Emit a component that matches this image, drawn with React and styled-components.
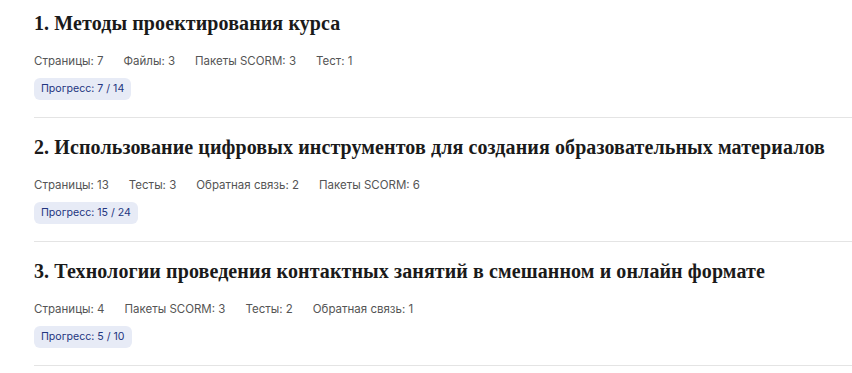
import React from "react";
import styled, { createGlobalStyle } from "styled-components";

const GlobalStyle = createGlobalStyle`
  body {
    margin: 0;
    background: #fff;
    font-family: Inter, "Noto Sans", sans-serif;
  }
`;

const Page = styled.div`
  padding: 0 0 0 34px;
`;

const Module = styled.section`
  padding: 10px 0 17px;
  border-bottom: 1px solid #e4e4e4;
  & + & {
    padding-top: 16px;
  }
`;

const Title = styled.h2`
  margin: 0;
  font-family: "Liberation Serif", "DejaVu Serif", serif;
  font-weight: 700;
  font-size: 20px;
  line-height: 26px;
  letter-spacing: 0.1px;
  color: #1a1a1a;
`;

const Stats = styled.div`
  display: flex;
  gap: 20px;
  margin-top: 17px;
  font-size: 11.5px;
  line-height: 16px;
  color: #555;
`;

const Progress = styled.span`
  display: inline-block;
  margin-top: 9px;
  padding: 3px 7px;
  border-radius: 6px;
  background: #e7ebf6;
  color: #23357f;
  font-size: 10.6px;
  line-height: 16px;
`;

const modules = [
  {
    title: "1. Методы проектирования курса",
    stats: ["Страницы: 7", "Файлы: 3", "Пакеты SCORM: 3", "Тест: 1"],
    progress: "7 / 14",
  },
  {
    title:
      "2. Использование цифровых инструментов для создания образовательных материалов",
    stats: ["Страницы: 13", "Тесты: 3", "Обратная связь: 2", "Пакеты SCORM: 6"],
    progress: "15 / 24",
  },
  {
    title:
      "3. Технологии проведения контактных занятий в смешанном и онлайн формате",
    stats: ["Страницы: 4", "Пакеты SCORM: 3", "Тесты: 2", "Обратная связь: 1"],
    progress: "5 / 10",
  },
];

export default function App() {
  return (
    <>
      <GlobalStyle />
      <Page>
        {modules.map((m) => (
          <Module key={m.title}>
            <Title>{m.title}</Title>
            <Stats>
              {m.stats.map((s) => (
                <span key={s}>{s}</span>
              ))}
            </Stats>
            <Progress>Прогресс: {m.progress}</Progress>
          </Module>
        ))}
      </Page>
    </>
  );
}
